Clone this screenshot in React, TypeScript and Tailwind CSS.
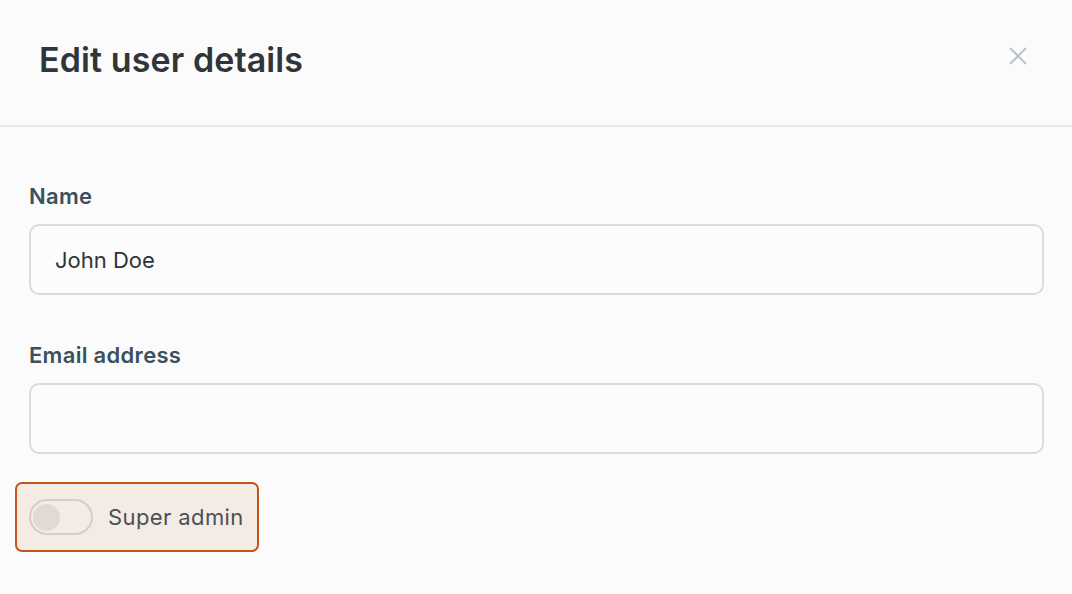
import { useState } from "react";

function CloseIcon() {
  return (
    <svg width="20" height="20" viewBox="0 0 20 20" fill="none" stroke="#b9c3c8" strokeWidth="2">
      <path d="M2 2 L18 18 M18 2 L2 18" />
    </svg>
  );
}

export default function App() {
  const [name, setName] = useState("John Doe");
  const [email, setEmail] = useState("");
  const [admin, setAdmin] = useState(false);

  return (
    <div
      className="w-[1072px] h-[594px] bg-[#fbfbfb] overflow-hidden"
      style={{ fontFamily: "Inter, 'Noto Sans', sans-serif" }}
    >
      {/* header */}
      <div className="h-[127px] flex items-center justify-between pl-[39px] pr-[44px] border-b-2 border-[#e4e7ea]">
        <h2 className="text-[34px] font-semibold text-[#2f3538] tracking-[0.1px] -mt-[6px]">Edit user details</h2>
        <button className="-mt-[14px]">
          <CloseIcon />
        </button>
      </div>

      {/* body */}
      <div className="px-[29px] pt-[55px] pr-[28px]">
        <label className="block text-[22px] font-semibold text-[#3c505c] leading-[28px] tracking-[0.3px]">Name</label>
        <input
          value={name}
          onChange={(e) => setName(e.target.value)}
          className="mt-[14px] w-full h-[71px] rounded-[10px] border-2 border-[#d8dce0] bg-[#fcfcfc] px-[24px] text-[22px] text-[#2d3436] outline-none"
        />

        <label className="block mt-[46px] text-[22px] font-semibold text-[#3c505c] leading-[28px] tracking-[0.3px]">Email address</label>
        <input
          value={email}
          onChange={(e) => setEmail(e.target.value)}
          className="mt-[14px] w-full h-[71px] rounded-[10px] border-2 border-[#d8dce0] bg-[#fcfcfc] px-[24px] text-[22px] text-[#2d3436] outline-none"
        />

        <div className="mt-[28px] -ml-[14px] inline-flex items-center gap-[15px] h-[70px] pl-[12px] pr-[13px] rounded-[7px] border-2 border-[#c4541a] bg-[#f5ebe5]">
          <button
            onClick={() => setAdmin(!admin)}
            className={`w-[64px] h-[36px] rounded-full border-2 border-[#d8ccc6] flex items-center px-[2px] ${admin ? "justify-end bg-[#c4541a]" : "justify-start bg-transparent"}`}
          >
            <span className="w-[27px] h-[27px] rounded-full bg-[#e2d9d5]" />
          </button>
          <span className="text-[22px] text-[#4a5154] tracking-[0.4px]">Super admin</span>
        </div>
      </div>
    </div>
  );
}
